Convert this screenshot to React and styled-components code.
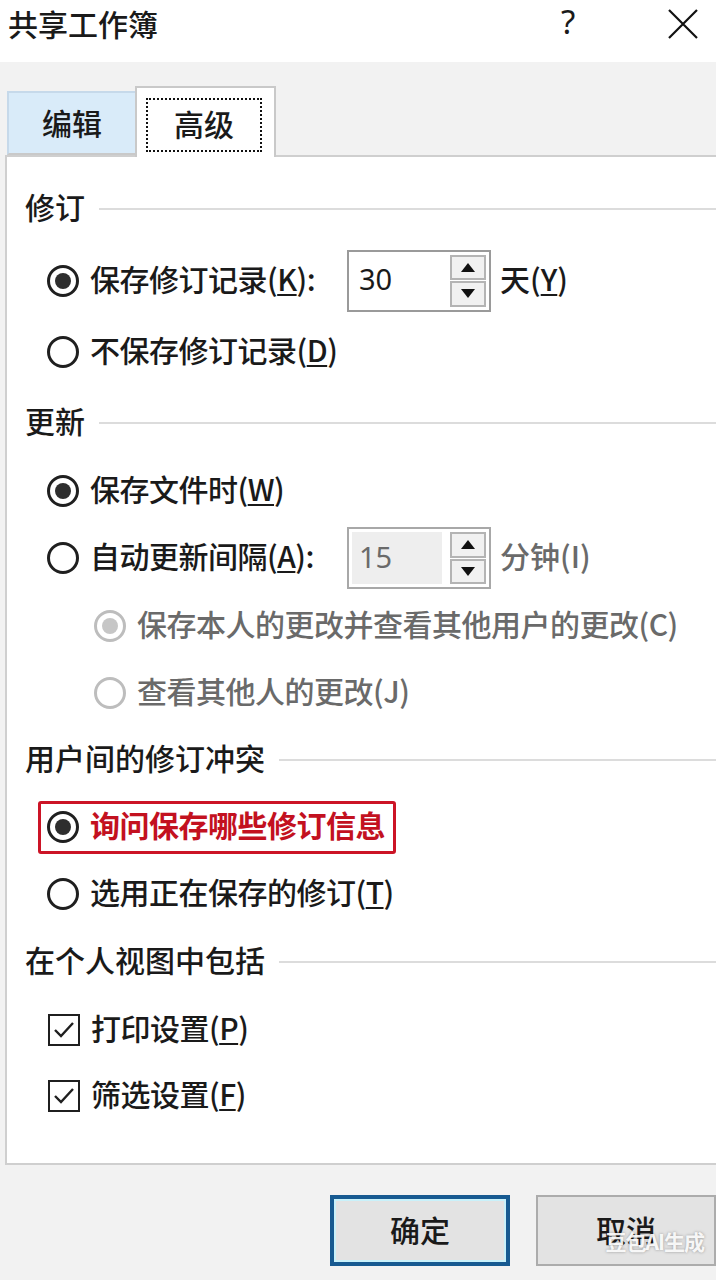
import React from 'react';
import styled, { createGlobalStyle } from 'styled-components';

const GlobalStyle = createGlobalStyle`
  html, body {
    margin: 0;
    padding: 0;
    background: #f2f2f2;
    overflow: hidden;
  }
  body {
    font-family: "Noto Sans CJK SC", "Noto Sans", sans-serif;
    color: #1a1a1a;
  }
`;

const Dialog = styled.div`
  width: 716px;
  height: 1280px;
  position: relative;
  overflow: hidden;
`;

const TitleBar = styled.div`
  height: 62px;
  background: #ffffff;
  display: flex;
  align-items: center;
  padding-left: 8px;
`;

const Title = styled.div`
  font-size: 30px;
  line-height: 1;
  flex: 1;
  margin-bottom: 16px;
  font-weight: 500;
`;

const HelpMark = styled.div`
  font-size: 33px;
  line-height: 1;
  width: 24px;
  margin-right: 82px;
  margin-bottom: 20px;
  font-family: "Noto Sans", sans-serif;
`;

const CloseBtn = styled.div`
  width: 32px;
  height: 32px;
  margin-right: 17px;
  margin-top: -14px;
  display: flex;
`;

const TabsRow = styled.div`
  display: flex;
  align-items: flex-end;
  padding-left: 7px;
  margin-top: 24px;
  height: 69px;
`;

const Tab = styled.div`
  box-sizing: border-box;
  display: flex;
  align-items: center;
  justify-content: center;
  font-size: 30px;
  line-height: 1;
  font-weight: 500;
  height: ${p => (p.$active ? '71px' : '64px')};
  width: ${p => (p.$active ? '141px' : '128px')};
  background: ${p => (p.$active ? '#ffffff' : '#d9ebf9')};
  border: 2px solid ${p => (p.$active ? '#c9c9c9' : '#c6d9ea')};
  border-bottom: ${p => (p.$active ? 'none' : '2px solid #c9c9c9')};
  border-right: ${p => (p.$active ? '2px solid #c9c9c9' : 'none')};
  margin-bottom: ${p => (p.$active ? '-2px' : '0')};
  position: relative;
  z-index: ${p => (p.$active ? 1 : 0)};
  padding-bottom: ${p => (p.$active ? '0' : '2px')};
`;

const FocusBox = styled.span`
  box-sizing: border-box;
  width: 116px;
  height: 54px;
  border: 2px dotted #111;
  display: flex;
  align-items: center;
  justify-content: center;
  margin-left: -3px;
  margin-top: 4px;
  padding-bottom: 4px;
`;

const Panel = styled.div`
  box-sizing: border-box;
  margin-left: 5px;
  width: 720px;
  height: 1010px;
  background: #ffffff;
  border: 2px solid #cfcfcf;
  padding-top: 16px;
  display: flex;
  flex-direction: column;
`;

const Heading = styled.div`
  height: ${p => p.$h}px;
  display: flex;
  align-items: center;
  padding-left: 18px;
  font-size: 30px;
  line-height: 1;
  font-weight: 500;
  gap: 14px;
  & > span {
    margin-bottom: 6px;
  }
  &::after {
    content: '';
    flex: 1;
    height: 2px;
    background: #dcdcdc;
  }
`;

const Row = styled.div`
  height: ${p => p.$h}px;
  display: flex;
  align-items: center;
  padding-left: ${p => (p.$indent ? 87 : 40)}px;
  font-size: 30px;
  line-height: 1;
  font-weight: 500;
  color: ${p => (p.$disabled ? '#6a6a6a' : '#1a1a1a')};
`;

const Label = styled.span`
  margin-left: 11px;
  margin-bottom: 6px;
  width: ${p => (p.$w ? `${p.$w}px` : 'auto')};
  white-space: nowrap;
  letter-spacing: -0.5px;
`;

const Acc = styled.span`
  text-decoration: underline;
  text-underline-offset: 3px;
  text-decoration-thickness: 2px;
`;

const RadioRing = styled.span`
  box-sizing: border-box;
  width: 32px;
  height: 32px;
  border-radius: 50%;
  border: 3px solid ${p => (p.$disabled ? '#bdbdbd' : '#1f1f1f')};
  background: #fff;
  display: flex;
  align-items: center;
  justify-content: center;
  flex-shrink: 0;
  &::after {
    content: '';
    display: ${p => (p.$checked ? 'block' : 'none')};
    width: 16px;
    height: 16px;
    border-radius: 50%;
    background: ${p => (p.$disabled ? '#c6c6c6' : '#2e2e2e')};
  }
`;

const CheckBox = styled.span`
  box-sizing: border-box;
  width: 32px;
  height: 32px;
  border: 2.5px solid #1f1f1f;
  background: #fff;
  display: flex;
  align-items: center;
  justify-content: center;
  flex-shrink: 0;
  margin-left: 1px;
`;

const Highlight = styled.div`
  display: flex;
  align-items: center;
  height: 47px;
  border: 3px solid #cc1426;
  border-radius: 3px;
  margin-left: -9px;
  padding: 0 8px 0 6px;
  color: #c3111f;
  font-weight: 700;
`;

const Spin = styled.div`
  box-sizing: border-box;
  width: 144px;
  height: 62px;
  border: 2px solid ${p => (p.$disabled ? '#a8a8a8' : '#9a9a9a')};
  background: #fff;
  display: flex;
  align-items: center;
  padding: 3px;
`;

const SpinValue = styled.div`
  flex: 1;
  height: 100%;
  display: flex;
  align-items: center;
  padding-left: 7px;
  padding-bottom: 4px;
  box-sizing: border-box;
  font-size: 29px;
  font-weight: 400;
  font-family: "Noto Sans", sans-serif;
  background: ${p => (p.$disabled ? '#eeeeee' : '#fff')};
  color: ${p => (p.$disabled ? '#6a6a6a' : '#1a1a1a')};
  margin-right: 8px;
`;

const SpinButtons = styled.div`
  width: 36px;
  height: 100%;
  display: flex;
  flex-direction: column;
  gap: 1px;
`;

const SpinButton = styled.div`
  box-sizing: border-box;
  flex: 1;
  border: 2px solid #b4b4b4;
  background: #f1f1f1;
  display: flex;
  align-items: center;
  justify-content: center;
`;

const Unit = styled.span`
  margin-left: 9px;
  margin-bottom: 6px;
  color: ${p => (p.$disabled ? '#6a6a6a' : '#1a1a1a')};
`;

const ButtonRow = styled.div`
  display: flex;
  gap: 26px;
  padding-left: 330px;
  margin-top: 30px;
`;

const DialogButton = styled.div`
  box-sizing: border-box;
  width: 183px;
  height: 71px;
  display: flex;
  align-items: center;
  justify-content: center;
  font-size: 30px;
  line-height: 1;
  font-weight: 500;
  padding-bottom: 4px;
  background: #e3e3e3;
  border: ${p => (p.$primary ? '4px solid #175a91' : '2px solid #acacac')};
  box-shadow: ${p => (p.$primary ? 'inset 0 0 0 2px #c9f1fa' : 'none')};
`;

const Watermark = styled.div`
  position: absolute;
  right: 12px;
  bottom: 24px;
  font-size: 21px;
  font-weight: 700;
  color: rgba(255, 255, 255, 0.92);
  text-shadow: 0 0 3px rgba(0, 0, 0, 0.35);
  letter-spacing: -1px;
`;

const Triangle = ({ up }) => (
  <svg width="14" height="9" viewBox="0 0 14 9">
    <path d={up ? 'M7 0 L14 9 L0 9 Z' : 'M0 0 L14 0 L7 9 Z'} fill="#111" />
  </svg>
);

const SpinBox = ({ value, disabled }) => (
  <Spin $disabled={disabled}>
    <SpinValue $disabled={disabled}>{value}</SpinValue>
    <SpinButtons>
      <SpinButton><Triangle up /></SpinButton>
      <SpinButton><Triangle /></SpinButton>
    </SpinButtons>
  </Spin>
);

const Check = () => (
  <CheckBox>
    <svg width="22" height="18" viewBox="0 0 22 18">
      <path d="M2 9 L8 15 L20 2" fill="none" stroke="#1f1f1f" strokeWidth="2.4" />
    </svg>
  </CheckBox>
);

const App = () => (
  <Dialog>
    <GlobalStyle />
    <TitleBar>
      <Title>共享工作簿</Title>
      <HelpMark>?</HelpMark>
      <CloseBtn>
        <svg width="32" height="32" viewBox="0 0 32 32">
          <path d="M2 2 L30 30 M30 2 L2 30" stroke="#111" strokeWidth="2.2" />
        </svg>
      </CloseBtn>
    </TitleBar>

    <TabsRow>
      <Tab>编辑</Tab>
      <Tab $active><FocusBox>高级</FocusBox></Tab>
    </TabsRow>

    <Panel>
      <Heading $h={72}><span>修订</span></Heading>
      <Row $h={71}>
        <RadioRing $checked />
        <Label $w={257}>保存修订记录(<Acc>K</Acc>):</Label>
        <SpinBox value="30" />
        <Unit>天(<Acc>Y</Acc>)</Unit>
      </Row>
      <Row $h={72}>
        <RadioRing />
        <Label>不保存修订记录(<Acc>D</Acc>)</Label>
      </Row>

      <Heading $h={69}><span>更新</span></Heading>
      <Row $h={67}>
        <RadioRing $checked />
        <Label>保存文件时(<Acc>W</Acc>)</Label>
      </Row>
      <Row $h={68}>
        <RadioRing />
        <Label $w={257}>自动更新间隔(<Acc>A</Acc>):</Label>
        <SpinBox value="15" disabled />
        <Unit $disabled>分钟(I)</Unit>
      </Row>
      <Row $h={68} $indent $disabled>
        <RadioRing $checked $disabled />
        <Label>保存本人的更改并查看其他用户的更改(C)</Label>
      </Row>
      <Row $h={66} $indent $disabled>
        <RadioRing $disabled />
        <Label>查看其他人的更改(J)</Label>
      </Row>

      <Heading $h={68}><span>用户间的修订冲突</span></Heading>
      <Row $h={66}>
        <Highlight>
          <RadioRing $checked />
          <Label>询问保存哪些修订信息</Label>
        </Highlight>
      </Row>
      <Row $h={67}>
        <RadioRing />
        <Label>选用正在保存的修订(<Acc>T</Acc>)</Label>
      </Row>

      <Heading $h={70}><span>在个人视图中包括</span></Heading>
      <Row $h={66}>
        <Check />
        <Label>打印设置(<Acc>P</Acc>)</Label>
      </Row>
      <Row $h={66}>
        <Check />
        <Label>筛选设置(<Acc>F</Acc>)</Label>
      </Row>
    </Panel>

    <ButtonRow>
      <DialogButton $primary>确定</DialogButton>
      <DialogButton>取消</DialogButton>
    </ButtonRow>

    <Watermark>豆包AI生成</Watermark>
  </Dialog>
);

export default App;
